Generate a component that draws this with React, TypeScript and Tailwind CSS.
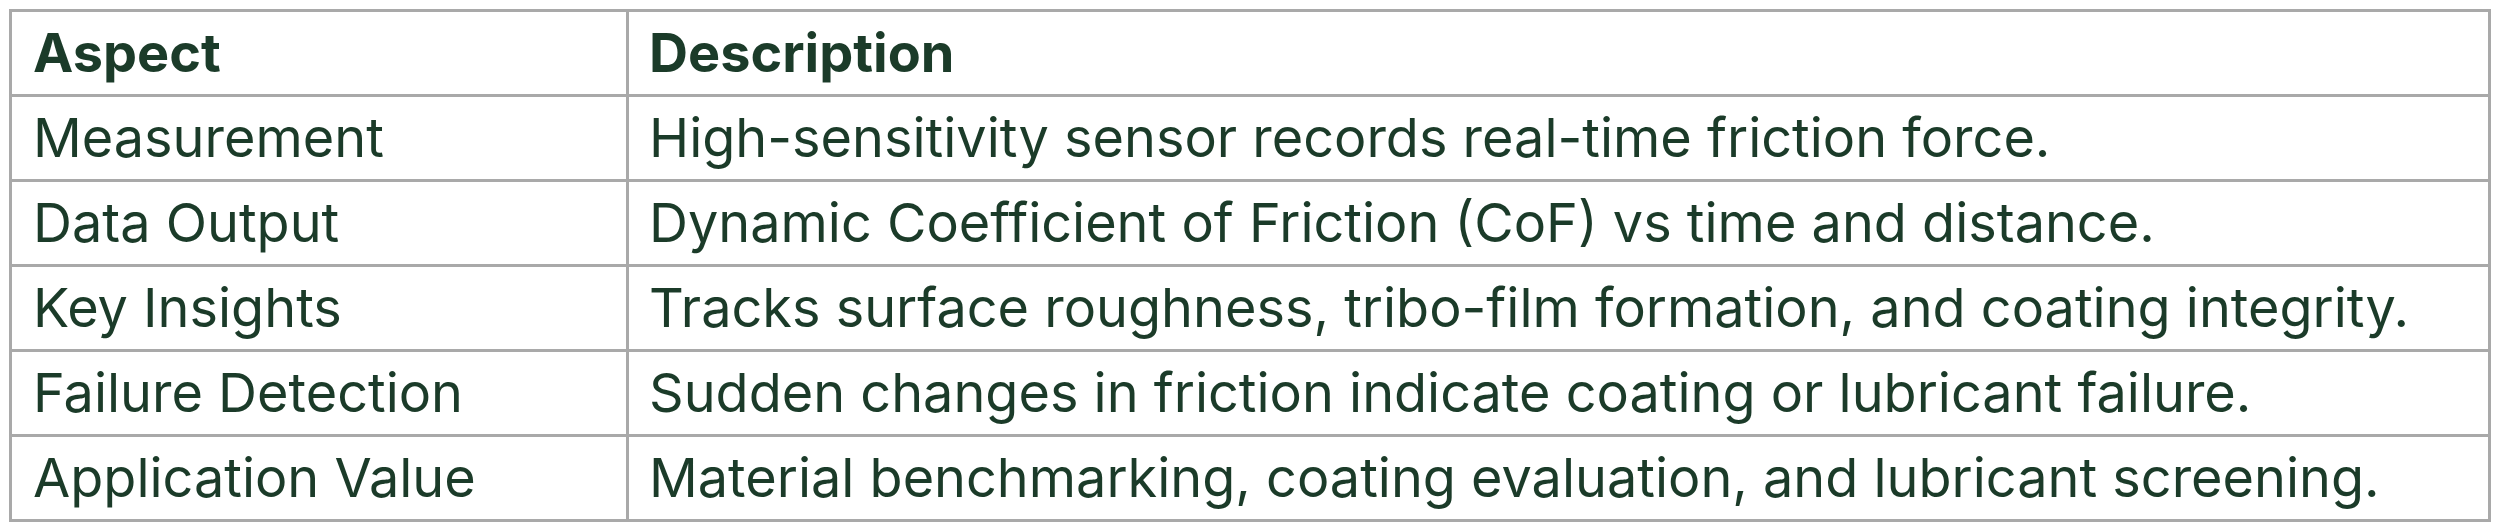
const rows = [
  ['Measurement', 'High-sensitivity sensor records real-time friction force.'],
  ['Data Output', 'Dynamic Coefficient of Friction (CoF) vs time and distance.'],
  ['Key Insights', 'Tracks surface roughness, tribo-film formation, and coating integrity.'],
  ['Failure Detection', 'Sudden changes in friction indicate coating or lubricant failure.'],
  ['Application Value', 'Material benchmarking, coating evaluation, and lubricant screening.'],
];

export default function App() {
  return (
    <div className="w-[2500px] h-[528px] bg-white pt-[9px] pl-[9px] font-['Inter',sans-serif] text-[#1b3b29]">
      <table className="w-[2482px] border-collapse border-[3px] border-[#a9a9a9] text-[54px] leading-none">
        <thead>
          <tr className="h-[85px]">
            <th className="w-[617px] border-[3px] border-[#a9a9a9] pl-[21px] text-left font-bold">Aspect</th>
            <th className="border-[3px] border-[#a9a9a9] pl-[20px] text-left font-bold">Description</th>
          </tr>
        </thead>
        <tbody>
          {rows.map(([a, d]) => (
            <tr key={a} className="h-[85px]">
              <td className="border-[3px] border-[#a9a9a9] pl-[21px]">{a}</td>
              <td className="border-[3px] border-[#a9a9a9] pl-[20px]">{d}</td>
            </tr>
          ))}
        </tbody>
      </table>
    </div>
  );
}
